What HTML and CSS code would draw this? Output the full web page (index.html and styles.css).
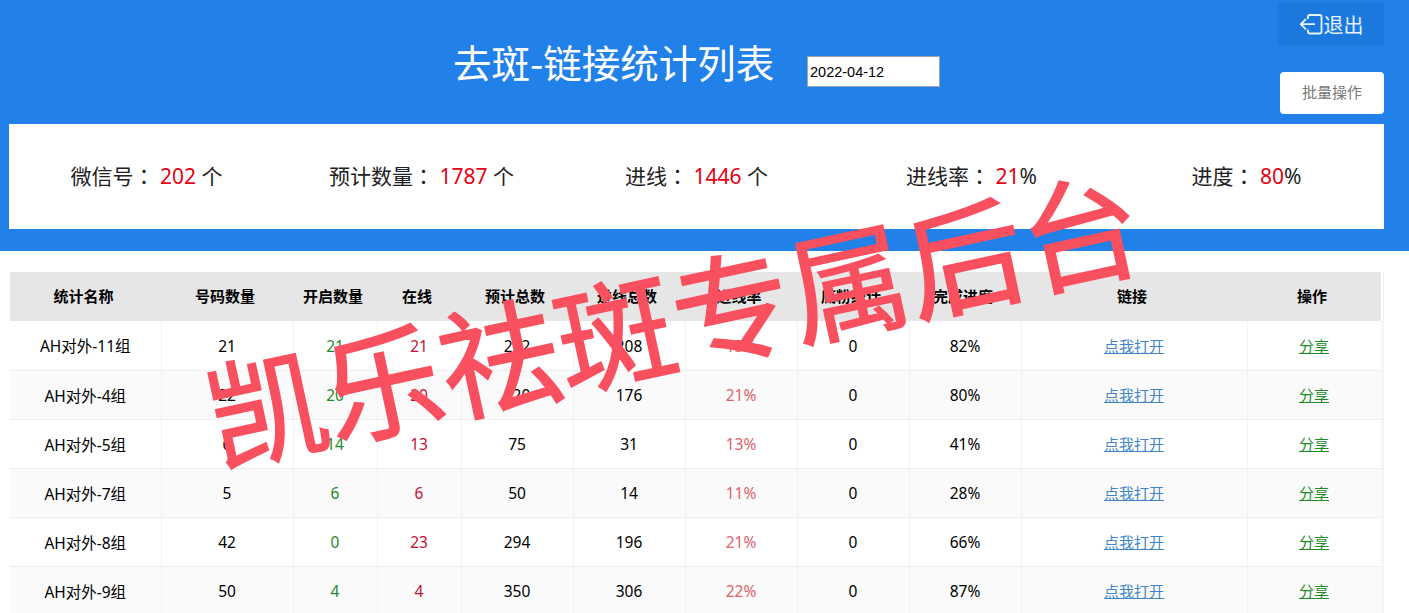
FILE: index.html
```html
<!DOCTYPE html>
<html lang="zh-CN">
<head>
    <meta charset="UTF-8">
    <meta name="viewport" content="width=device-width, initial-scale=1.0">
    <title>去斑-链接统计列表</title>
    <link rel="stylesheet" href="styles.css">
</head>
<body>
    <div class="header">
        <div class="header-top">
            <h1>去斑-链接统计列表</h1>
            <input class="date-input" type="text" value="2022-04-12">
            <div class="actions">
                <a class="logout-btn" href="#">
                    <svg width="24" height="24" viewBox="0 0 24 24" fill="none" stroke="#e6f4ff" stroke-width="1.8">
                        <path d="M9 7V4.500Q9 3 10.500 3H21Q22.500 3 22.500 4.500V20Q22.500 21.500 21 21.500H10.500Q9 21.500 9 20V17.500"/>
                        <path d="M16 12.200H2M7 7L1.800 12.200L7 17.400"/>
                    </svg>
                    退出
                </a>
                <button class="batch-btn">批量操作</button>
            </div>
        </div>
        <div class="stats">
            <div class="stat">微信号<span class="colon" lang="zh-TW">：</span> <span class="red">202</span> 个</div>
            <div class="stat">预计数量<span class="colon" lang="zh-TW">：</span> <span class="red">1787</span> 个</div>
            <div class="stat">进线<span class="colon" lang="zh-TW">：</span> <span class="red">1446</span> 个</div>
            <div class="stat">进线率<span class="colon" lang="zh-TW">：</span> <span class="red">21</span>%</div>
            <div class="stat">进度<span class="colon" lang="zh-TW">：</span> <span class="red">80</span>%</div>
        </div>
    </div>

    <div class="table-wrap">
        <table class="list">
            <thead>
                <tr>
                    <th class="c-name">统计名称</th>
                    <th class="c-num">号码数量</th>
                    <th class="c-open">开启数量</th>
                    <th class="c-open">在线</th>
                    <th class="c-std">预计总数</th>
                    <th class="c-std">进线总数</th>
                    <th class="c-std">进线率</th>
                    <th class="c-std">底粉统计</th>
                    <th class="c-std">完成进度</th>
                    <th class="c-link">链接</th>
                    <th class="c-op">操作</th>
                </tr>
            </thead>
            <tbody id="rows"></tbody>
        </table>
    </div>

    <div class="watermark">凯乐祛斑专属后台</div>

    <script>
        var rows = [
            ['AH对外-11组', 21, 21, 21, 252, 208, '13%', 0, '82%'],
            ['AH对外-4组', 22, 20, 20, 220, 176, '21%', 0, '80%'],
            ['AH对外-5组', 6, 14, 13, 75, 31, '13%', 0, '41%'],
            ['AH对外-7组', 5, 6, 6, 50, 14, '11%', 0, '28%'],
            ['AH对外-8组', 42, 0, 23, 294, 196, '21%', 0, '66%'],
            ['AH对外-9组', 50, 4, 4, 350, 306, '22%', 0, '87%']
        ];
        document.getElementById('rows').innerHTML = rows.map(function (r) {
            return '<tr><td>' + r[0] + '</td><td>' + r[1] + '</td>' +
                '<td class="green">' + r[2] + '</td><td class="crimson">' + r[3] + '</td>' +
                '<td>' + r[4] + '</td><td>' + r[5] + '</td><td class="rate">' + r[6] + '</td>' +
                '<td>' + r[7] + '</td><td>' + r[8] + '</td>' +
                '<td><a class="open-link" href="#">点我打开</a></td>' +
                '<td><a class="share-link" href="#">分享</a></td></tr>';
        }).join('');
    </script>
</body>
</html>
```

FILE: styles.css
```css
body {
    margin: 0;
    height: 613px;
    overflow: hidden;
    position: relative;
    background-color: #fff;
    color: #000;
    font-family: "Noto Sans", "Noto Sans CJK SC", sans-serif;
}

/* Header */
.header {
    height: 251px;
    background-color: #2181e8;
}
.header-top {
    height: 124px;
    display: flex;
    align-items: flex-start;
}
h1 {
    margin: 36px 0 0 453px;
    width: 320px;
    white-space: nowrap;
    font-size: 38.5px;
    line-height: 50px;
    font-weight: 400;
    color: #fff;
    font-family: "Noto Sans CJK SC", sans-serif;
}
.date-input {
    box-sizing: border-box;
    width: 133px;
    height: 31px;
    margin: 56px 0 0 34px;
    padding: 0 2px;
    border: 1px solid #9aa5b1;
    background-color: #fff;
    font-family: "Liberation Sans", sans-serif;
    font-size: 14.5px;
    color: #000;
}
.actions {
    margin: 3px 25px 0 auto;
    width: 106px;
    display: flex;
    flex-direction: column;
    align-items: flex-end;
}
.logout-btn {
    width: 106px;
    height: 42px;
    display: flex;
    align-items: center;
    justify-content: center;
    gap: 1px;
    background-color: #1b78dc;
    color: #e6f2ff;
    font-size: 20px;
    text-decoration: none;
}
.batch-btn {
    width: 104px;
    height: 42px;
    margin-top: 27px;
    padding: 0 0 3px;
    border: none;
    border-radius: 4px;
    background-color: #fff;
    color: #777;
    font-family: "Noto Sans CJK SC", sans-serif;
    font-size: 15px;
}

/* Stats */
.stats {
    box-sizing: border-box;
    margin-left: 9px;
    width: 1375px;
    height: 105px;
    padding-bottom: 3px;
    display: grid;
    grid-template-columns: repeat(5, 1fr);
    align-items: center;
    background-color: #fff;
}
.stat {
    text-align: center;
    font-size: 21px;
    color: #222;
}
.colon {
    font-family: "Noto Sans CJK TC", sans-serif;
}
.red {
    color: #e60012;
}

/* Table */
.table-wrap {
    margin: 21px 0 0 10px;
    width: 1373px;
    border-right: 1px solid #f0f0f0;
}
.list {
    width: 1371px;
    border-collapse: collapse;
    table-layout: fixed;
    font-size: 15.5px;
}
.list th {
    box-sizing: border-box;
    height: 49px;
    padding: 0 4px 3px 0;
    background-color: #e6e6e6;
    font-size: 15px;
    font-weight: 700;
    font-family: "Noto Sans CJK SC", sans-serif;
}
.list td {
    box-sizing: border-box;
    height: 49px;
    padding: 1px 0 0;
    text-align: center;
    border-bottom: 1px solid #eee;
    border-right: 1px solid #f2f2f2;
}
.list tbody tr:nth-child(even) {
    background-color: #fafafa;
}
.c-name { width: 151px; }
.c-num { width: 132px; }
.c-open { width: 84px; }
.c-std { width: 112px; }
.c-link { width: 226px; }
.c-op { width: 134px; }

.green { color: #1e8a2a; }
.crimson { color: #c8102e; }
.rate { color: #e0616c; }
.open-link { color: #3f85c8; font-size: 15px; }
.share-link { color: #1e8a2a; font-size: 15px; }

/* Watermark laid over the table */
.watermark {
    position: absolute;
    left: 207px;
    top: 356px;
    white-space: nowrap;
    font-size: 119px;
    font-weight: 400;
    line-height: 1;
    color: #f9505f;
    -webkit-text-stroke: 1.5px #f9505f;
    font-family: "Noto Sans CJK SC", sans-serif;
    transform: rotate(-12.2deg);
    transform-origin: left center;
}
```
